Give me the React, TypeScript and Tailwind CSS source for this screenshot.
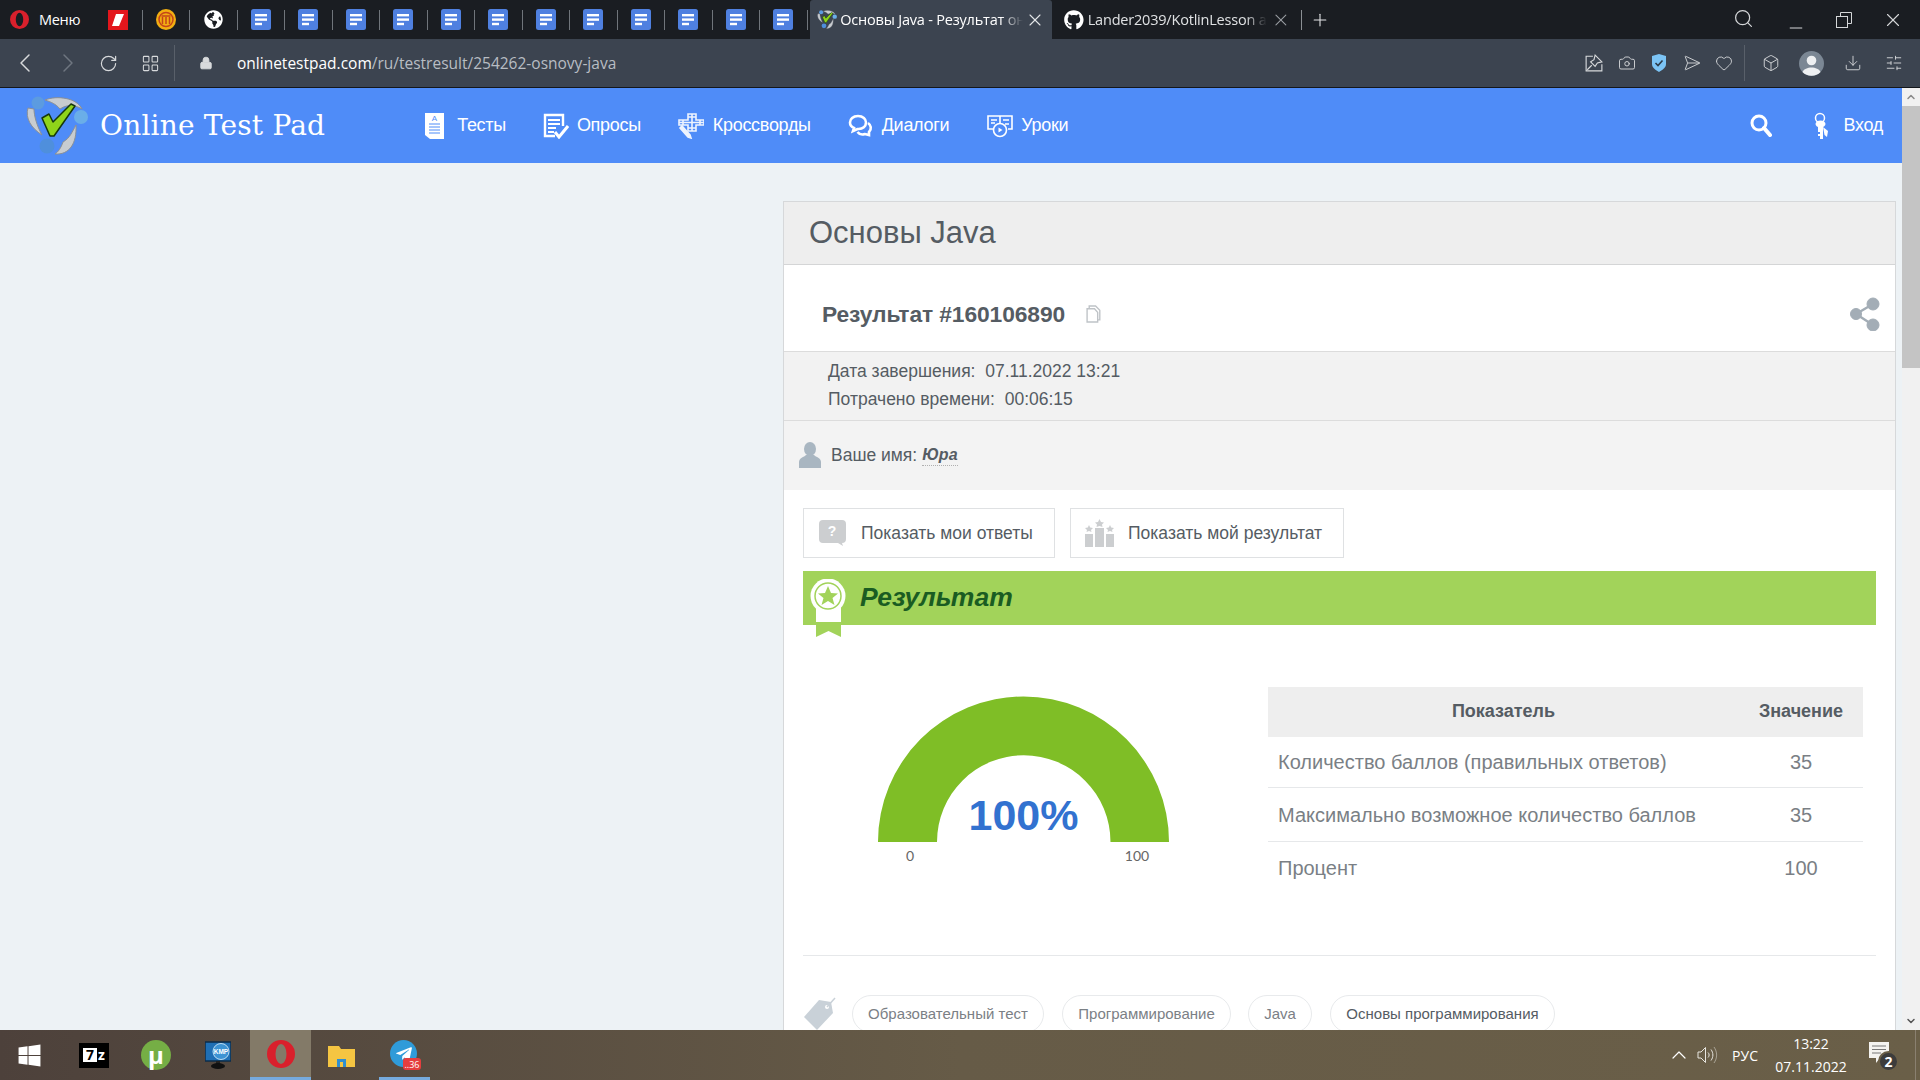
import { Box, Camera, ChevronDown, ChevronLeft, ChevronRight, ChevronUp, Download, Heart, LayoutGrid, Lock, Minus, Plus, RotateCw, Search, SendHorizontal, SlidersHorizontal, X } from "lucide-react";
import { FaGithub, FaGlobeAmericas, FaTelegramPlane, FaWindows } from "react-icons/fa";

const chromeFont = { fontFamily: '"Open Sans", sans-serif' };

const Logo = ({ size }: { size: number }) => (
  <svg width={(size * 64) / 60} height={size} viewBox="0 0 64 60">
    <path d="M3 12 C0 22 6 32 17 39 C12 30 9 20 9 13 Z" fill="#c8ccd0" stroke="#8b9096" strokeWidth="1" />
    <path d="M20 4 C32 -1 52 2 57 13 C52 10 44 7 35 13 C31 8 26 6 20 4 Z" fill="#c8ccd0" stroke="#8b9096" strokeWidth="1" />
    <path d="M30 58 C44 59 52 48 51 29 C47 36 45 42 38 46 C36 52 33 56 30 58 Z" fill="#c8ccd0" stroke="#8b9096" strokeWidth="1" />
    <circle cx="13" cy="7" r="6.500" fill="#5c9be0" />
    <circle cx="56" cy="21" r="7" fill="#6aaee8" />
    <circle cx="22" cy="50" r="7.500" fill="#4f8fdc" />
    <path d="M17 22 L24 18 L28 26 L46 8 L50 10 L29 40 L25 40 Z" fill="#8fd41a" stroke="#16380c" strokeWidth="1.500" strokeLinejoin="round" />
  </svg>
);

const DocIcon = () => (
  <svg width="20" height="21" viewBox="0 0 20 21">
    <rect width="20" height="21" rx="2.5" fill="#4f80e0" />
    <rect x="4" y="5" width="12" height="2.4" fill="#fff" />
    <rect x="4" y="9.4" width="12" height="2.4" fill="#fff" />
    <rect x="4" y="13.8" width="7" height="2.4" fill="#fff" />
  </svg>
);

const PinnedSlot = ({ children }: { children: React.ReactNode }) => (
  <div className="flex h-full w-[47.5px] items-center">
    <div className="flex flex-1 justify-center">{children}</div>
    <div className="h-[20px] w-px bg-[#70757b]" />
  </div>
);

const OperaIcon = ({ size }: { size: number }) => (
  <svg width={size} height={size} viewBox="0 0 28 28">
    <path
      fillRule="evenodd"
      fill="#d9202c"
      d="M14 0 A14 14 0 1 1 14 28 A14 14 0 1 1 14 0 Z M14 4 A5.500 10 0 1 0 14 24 A5.500 10 0 1 0 14 4 Z"
    />
  </svg>
);

function TabStrip() {
  const docs = Array.from({ length: 12 }, (_, i) => i);
  return (
    <div className="flex h-[39px] shrink-0 items-center bg-[#1a1d22] text-white" style={chromeFont}>
      <div className="flex h-full w-[810px] items-center">
        <div className="flex w-[95px] items-center pl-[10px]">
          <OperaIcon size={19} />
          <span className="ml-[10px] text-[14.5px] tracking-[-0.3px]">Меню</span>
        </div>
        <PinnedSlot>
          <svg width="20" height="20" viewBox="0 0 20 20">
            <rect width="20" height="20" fill="#e3161c" />
            <path d="M8 4 H16 L11 16 H4 Z" fill="#fff" />
          </svg>
        </PinnedSlot>
        <PinnedSlot>
          <svg width="20" height="21" viewBox="0 0 20 21">
            <ellipse cx="10" cy="10.5" rx="10" ry="10.5" fill="#f2ae12" />
            <circle cx="10" cy="10.5" r="7" fill="none" stroke="#c4441a" strokeWidth="1.5" />
            <path d="M6.5 8 V15 M10 8 V15 M13.5 8 V15 M5.5 7 H14.5" stroke="#c4441a" strokeWidth="1.5" />
          </svg>
        </PinnedSlot>
        <PinnedSlot>
          <FaGlobeAmericas className="h-[19px] w-[19px]" />
        </PinnedSlot>
        {docs.map((d) => (
          <PinnedSlot key={d}>
            <DocIcon />
          </PinnedSlot>
        ))}
      </div>
      <div className="flex h-full w-[242px] items-center rounded-t-[3px] bg-[#3c4450] pl-[7px]">
        <Logo size={19} />
        <span className="ml-[3px] w-[183px] overflow-hidden whitespace-nowrap text-[14.5px] tracking-[-0.2px] [mask-image:linear-gradient(to_right,black_88%,transparent)]">
          Основы Java - Результат онлайн теста
        </span>
        <X className="ml-[2px] h-5 w-5 text-[#e4e6e8]" strokeWidth={1.3} />
      </div>
      <div className="flex h-full w-[250px] items-center pl-[12px]">
        <FaGithub className="h-[20px] w-[20px]" />
        <span className="ml-[4px] w-[182px] overflow-hidden whitespace-nowrap text-[14.5px] tracking-[-0.2px] text-[#dfe1e3] [mask-image:linear-gradient(to_right,black_88%,transparent)]">
          Lander2039/KotlinLesson at main
        </span>
        <X className="ml-[4px] h-5 w-5 text-[#9a9ea3]" strokeWidth={1.3} />
        <div className="ml-[10px] h-[20px] w-px bg-[#8b8f94]" />
      </div>
      <Plus className="ml-[8px] h-5 w-5 text-[#e4e6e8]" strokeWidth={1.3} />
      <div className="ml-auto flex items-center pr-[16px] text-[#d5d7d9]">
        <Search className="mb-[2px] h-[21px] w-[21px]" strokeWidth={1.4} />
        <Minus className="ml-[32px] mt-[16px] h-5 w-5" strokeWidth={1.2} />
        <svg className="ml-[30px]" width="16" height="16" viewBox="0 0 16 16" fill="none" stroke="currentColor">
          <rect x="0.5" y="4.5" width="11" height="11" />
          <path d="M4.5 4.5 V0.5 H15.5 V11.5 H11.5" />
        </svg>
        <X className="ml-[30px] h-[22px] w-[22px]" strokeWidth={1.2} />
      </div>
    </div>
  );
}

function Toolbar() {
  return (
    <div className="flex h-[49px] shrink-0 items-center border-b border-[#14171b] bg-[#3c4450] text-[#d8dadc]" style={chromeFont}>
      <ChevronLeft className="ml-[9px] h-8 w-8" strokeWidth={1.1} />
      <ChevronRight className="ml-[11px] h-8 w-8 text-[#6f7680]" strokeWidth={1.1} />
      <RotateCw className="ml-[15px] h-[19px] w-[19px]" strokeWidth={1.5} />
      <LayoutGrid className="ml-[23px] h-[19px] w-[19px]" strokeWidth={1.3} />
      <div className="ml-[14px] h-[36px] w-px bg-[#59606a]" />
      <Lock className="ml-[24px] h-[16px] w-[14px] fill-[#d8dadc]" strokeWidth={1.5} />
      <div className="ml-[24px] mt-[1px] text-[15.5px]">
        <span className="text-white">onlinetestpad.com</span>
        <span className="text-[#b8bdc3]">/ru/testresult/254262-osnovy-java</span>
      </div>
      <div className="ml-auto flex items-center pr-[17px]">
        <div className="flex items-center gap-[14.5px]">
          <svg width="18" height="18" viewBox="0 0 16 16" fill="none" stroke="currentColor">
            <path d="M7 2 H1 V15 H15 V9" />
            <path d="M9 1 L15 7 L11 8 L9 11 L5 7 L8 5 Z M6 10 L2 14" />
          </svg>
          <Camera className="h-[18px] w-[18px]" strokeWidth={1.2} />
          <svg width="18" height="18" viewBox="0 0 16 18">
            <path d="M8 0 L15 2 V10 C15 14 11 16 8 18 C5 16 1 14 1 10 V2 Z" fill="#7cc4f5" />
            <path d="M4.5 9 L7 11.5 L11.5 6.5" fill="none" stroke="#2c3a48" strokeWidth="1.6" />
          </svg>
          <SendHorizontal className="h-[18px] w-[18px]" strokeWidth={1.2} />
          <Heart className="h-[18px] w-[18px]" strokeWidth={1.2} />
        </div>
        <div className="ml-[11px] h-[36px] w-px bg-[#59606a]" />
        <Box className="ml-[17px] h-[18px] w-[18px]" strokeWidth={1.2} />
        <svg className="ml-[19px]" width="25" height="25" viewBox="0 0 25 25">
          <circle cx="12.5" cy="12.5" r="12.5" fill="#7b8794" />
          <circle cx="12.5" cy="9.5" r="4.8" fill="#eef0f2" />
          <path d="M3.5 21 C6 15 19 15 21.5 21 C17 26 8 26 3.5 21 Z" fill="#eef0f2" />
        </svg>
        <Download className="ml-[20px] h-[18px] w-[18px]" strokeWidth={1.2} />
        <SlidersHorizontal className="ml-[23px] h-[18px] w-[18px]" strokeWidth={1.2} />
      </div>
    </div>
  );
}

const NavItem = ({ icon, label, className }: { icon: React.ReactNode; label: string; className: string }) => (
  <div className={`flex items-center ${className}`}>
    {icon}
    <span className="text-[18px] tracking-[-0.3px]">{label}</span>
  </div>
);

function SiteHeader() {
  return (
    <div className="flex h-[75px] shrink-0 items-center bg-[#4f8cf8] text-white">
      <div className="ml-[25px] w-[64px]">
        <Logo size={60} />
      </div>
      <span className="ml-[11px] text-[28px] tracking-[0.2px]" style={{ fontFamily: '"DejaVu Serif", serif' }}>
        Online Test Pad
      </span>
      <NavItem
        className="ml-[100px]"
        label="Тесты"
        icon={
          <svg className="mr-[13px]" width="19" height="26" viewBox="0 0 19 26">
            <path d="M0 0 H19 V26 H5 L0 22 Z" fill="#fff" />
            <text x="9.5" y="8" fontSize="8" textAnchor="middle" fill="#4f8cf8" fontFamily="Liberation Sans">A</text>
            <path d="M4 11 H15 M4 14 H15 M4 17 H15 M4 20 H15" stroke="#4f8cf8" strokeWidth="1" />
          </svg>
        }
      />
      <NavItem
        className="ml-[37px]"
        label="Опросы"
        icon={
          <svg className="mr-[8px]" width="26" height="26" viewBox="0 0 26 26" fill="none" stroke="#fff">
            <path d="M12 23 H2 V2 H20 V13" strokeWidth="2.4" />
            <path d="M5 7 H17 M5 11 H17 M5 15 H13 M5 19 H11" strokeWidth="1.8" />
            <path d="M12 19 L16 24 L25 13" strokeWidth="3" />
          </svg>
        }
      />
      <NavItem
        className="ml-[37px]"
        label="Кроссворды"
        icon={
          <svg className="mr-[9px]" width="26" height="26" viewBox="0 0 26 26" fill="none" stroke="#fff" strokeWidth="1.6" opacity="0.9">
            <path d="M10 1 H18 V7 H26 V12 H18 V18 H10 V12 H1 V7 H10 Z" />
            <path d="M14 1 V18 M10 4 H18 M1 9.5 H26 M5 7 V12 M22 7 V12 M10 15 H18" />
            <path d="M2 15 L10 24 L13 25 L12 22 L4 13 Z" fill="#fff" />
          </svg>
        }
      />
      <NavItem
        className="ml-[37px]"
        label="Диалоги"
        icon={
          <svg className="mr-[9px]" width="25" height="24" viewBox="0 0 25 24" fill="none" stroke="#fff" strokeWidth="2.6">
            <path d="M10 2 C5 2 2 5 2 8.5 C2 11 3.5 13 6 14 L5 17 L9.5 15 C15 15.500 18 12 18 8.5 C18 5 15 2 10 2 Z" />
            <path d="M20 9 C23 11 24 15 21 18 L21 21 L17 20 C14 21 11 20 9.500 18" />
          </svg>
        }
      />
      <NavItem
        className="ml-[38px]"
        label="Уроки"
        icon={
          <svg className="mr-[8px]" width="26" height="24" viewBox="0 0 26 24" fill="none" stroke="#fff" strokeWidth="1.6">
            <path d="M1 2 H13 V15 H1 Z M13 2 H25 V15 H21" />
            <path d="M4 6 H10 M4 9 H8 M16 6 H22 M18 10 H22" />
            <circle cx="13" cy="16" r="6.500" fill="#4f8cf8" />
            <path d="M11.500 13.500 L15.500 16 L11.500 18.500 Z" fill="#fff" stroke="none" />
          </svg>
        }
      />
      <div className="ml-auto flex items-center pr-[19px]">
        <svg width="22" height="23" viewBox="0 0 22 23" fill="none" stroke="#fff">
          <circle cx="9" cy="9" r="7" strokeWidth="3" />
          <path d="M14 14 L20 21" strokeWidth="4" strokeLinecap="round" />
        </svg>
        <svg className="ml-[42px]" width="15" height="27" viewBox="0 0 15 27" fill="#fff">
          <circle cx="6" cy="6" r="4.500" fill="none" stroke="#fff" strokeWidth="1.500" />
          <ellipse cx="6.500" cy="12" rx="5" ry="3.500" />
          <path d="M4 13 H9 V27 H6 V24 H4 V22 H6 V20 H4 Z" />
          <path d="M9 15 L14 19 L13 25 L10.500 23 Z" />
        </svg>
        <span className="ml-[14px] text-[18px] tracking-[-0.3px]">Вход</span>
      </div>
    </div>
  );
}

function Gauge() {
  return (
    <div className="relative ml-[75px] mt-[9px] h-[175px] w-[291px]">
      <svg width="291" height="146" viewBox="0 0 291 146">
        <path d="M0 146 A145.500 145.500 0 0 1 291 146 H232.500 A86.500 86.500 0 0 0 59 146 Z" fill="#7fbe26" />
      </svg>
      <div className="absolute left-0 right-0 top-[92px] text-center text-[43px] font-bold leading-[54px] text-[#3272d0]">100%</div>
      <div className="absolute left-[28px] top-[151px] w-[8px] text-center text-[14px] leading-[18px] text-[#666]" style={{ fontFamily: '"Lato", sans-serif' }}>0</div>
      <div className="absolute left-[246px] top-[151px] w-[26px] text-center text-[14px] leading-[18px] text-[#666]" style={{ fontFamily: '"Lato", sans-serif' }}>100</div>
    </div>
  );
}

const rows = [
  { name: "Количество баллов (правильных ответов)", value: "35", h: "h-[51px]" },
  { name: "Максимально возможное количество баллов", value: "35", h: "h-[54px]" },
  { name: "Процент", value: "100", h: "h-[51px]" },
];

function ResultTable() {
  return (
    <div className="w-[595px]">
      <div className="flex h-[50px] items-center bg-[#eeeeee] pb-[1px] text-[18px] font-bold text-[#555c63]">
        <div className="w-[471px] text-center">Показатель</div>
        <div className="w-[124px] text-center">Значение</div>
      </div>
      {rows.map((r, i) => (
        <div key={r.name} className={`flex items-center text-[20px] text-[#7a7f85] ${r.h} ${i < 2 ? "border-b border-[#e6e8ea]" : ""}`}>
          <div className="w-[471px] pl-[10px]">{r.name}</div>
          <div className="w-[124px] text-center">{r.value}</div>
        </div>
      ))}
    </div>
  );
}

const tags = [
  { label: "Образовательный тест", w: "w-[192px]", color: "text-[#7b8085]", ml: "ml-[16px]" },
  { label: "Программирование", w: "w-[169px]", color: "text-[#7b8085]", ml: "ml-[18px]" },
  { label: "Java", w: "w-[64px]", color: "text-[#7b8085]", ml: "ml-[17px]" },
  { label: "Основы программирования", w: "w-[225px]", color: "text-[#555c63]", ml: "ml-[18px]" },
];

function ResultCard() {
  return (
    <div className="w-[1113px] border-x border-t border-[#d6d8da] bg-white text-[#555c63]">
      <div className="flex h-[63px] items-center border-b border-[#d4d5d6] bg-[#eeeeee] pl-[25px] text-[31px]">Основы Java</div>
      <div className="flex h-[87px] items-center border-b border-[#dcdcdc] pl-[38px] pr-[15px] pt-[12px]">
        <span className="text-[22.8px] font-bold tracking-[-0.1px]">Результат #160106890</span>
        <svg className="ml-[21px]" width="17" height="18" viewBox="0 0 16 17" fill="none" stroke="#bfc3c7" strokeWidth="1.300">
          <path d="M3 3 V1 H9 L13 5 V14 H11" />
          <path d="M1 3.500 H8 L11 7 V16 H1 Z" fill="#fff" />
        </svg>
        <svg className="ml-auto" width="30" height="34" viewBox="0 0 30 34" fill="#a3adb6" stroke="#a3adb6">
          <path d="M6 17 L23 7 M6 17 L23 28" strokeWidth="2.500" />
          <circle cx="23" cy="7" r="6" />
          <circle cx="6" cy="17" r="5.500" />
          <circle cx="23" cy="28" r="6" />
        </svg>
      </div>
      <div className="flex h-[69px] flex-col justify-center gap-[5px] border-b border-[#dcdcdc] bg-[#f2f2f2] pb-[2px] pl-[44px] text-[17.5px] leading-[23px]">
        <div>Дата завершения:&nbsp; 07.11.2022 13:21</div>
        <div>Потрачено времени:&nbsp; 00:06:15</div>
      </div>
      <div className="flex h-[69px] items-center bg-[#f3f3f3] pb-[1px] pl-[15px] text-[17.5px]">
        <svg width="22" height="26" viewBox="0 0 22 26" fill="#a9b6c1">
          <ellipse cx="11" cy="7" rx="6" ry="7" />
          <path d="M0 26 V20 C0 16 5 15 7 13 H15 C17 15 22 16 22 20 V26 Z" />
        </svg>
        <span className="ml-[10px]">Ваше имя:</span>
        <span className="ml-[5px] border-b border-dotted border-[#b0b0b0] text-[16px] font-bold italic leading-[20px]">Юра</span>
      </div>
      <div className="mx-[19px] mt-[18px] flex gap-[15px] text-[17.5px]">
        <div className="flex h-[50px] w-[252px] items-center border border-[#dfe1e3] pl-[14px]">
          <svg width="29" height="28" viewBox="0 0 29 28">
            <path d="M5 1 H24 A4 4 0 0 1 28 5 V20 A4 4 0 0 1 24 24 L25 27 L20 24 H5 A4 4 0 0 1 1 20 V5 A4 4 0 0 1 5 1 Z" fill="#ccced0" />
            <text x="14" y="17" fontSize="14" fontWeight="bold" textAnchor="middle" fill="#fff" fontFamily="Liberation Sans">?</text>
          </svg>
          <span className="ml-[14px]">Показать мои ответы</span>
        </div>
        <div className="flex h-[50px] w-[274px] items-center border border-[#dfe1e3] pl-[14px]">
          <svg width="29" height="28" viewBox="0 0 29 28" fill="#ccced0">
            <rect x="0" y="15" width="8" height="13" />
            <rect x="10" y="9" width="9" height="19" />
            <rect x="21" y="15" width="8" height="13" />
            <path d="M14.500 0 L16 3 L19 3.500 L17 5.500 L17.500 8 L14.500 7 L11.500 8 L12 5.500 L10 3.500 L13 3 Z" />
            <path d="M4 6 L5.200 8.500 L8 9 L6 11 L6.500 13 L4 12 L1.500 13 L2 11 L0 9 L2.800 8.500 Z" />
            <path d="M25 6 L26.200 8.500 L29 9 L27 11 L27.500 13 L25 12 L22.500 13 L23 11 L21 9 L23.800 8.500 Z" />
          </svg>
          <span className="ml-[14px]">Показать мой результат</span>
        </div>
      </div>
      <div className="relative mx-[19px] mt-[13px] flex h-[54px] items-center bg-[#a2d35a] pl-[57px] text-[26.5px] font-bold italic text-[#1a5c22]">
        Результат
        <svg className="absolute left-[7px] top-[8px]" width="36" height="58" viewBox="0 0 36 58">
          <path d="M6 26 H31 V58 L18.500 52 L6 58 Z" fill="#a2d35a" />
          <rect x="6" y="26" width="25" height="17" fill="#fff" />
          <circle cx="18" cy="17" r="17.500" fill="#fff" />
          <circle cx="18" cy="17" r="13" fill="none" stroke="#a2d35a" strokeWidth="1.500" />
          <path d="M18 7 L21 14 L28 14.500 L22.500 19 L24.500 26 L18 22 L11.500 26 L13.500 19 L8 14.500 L15 14 Z" fill="#a2d35a" />
        </svg>
      </div>
      <div className="mx-[19px] mt-[62px] flex h-[269px] border-b border-[#e6e8ea]">
        <div className="w-[465px]">
          <Gauge />
        </div>
        <ResultTable />
      </div>
      <div className="ml-[19px] mt-[39px] flex items-center text-[15px]">
        <svg width="33" height="34" viewBox="0 0 33 34">
          <path d="M16 3 L28 5 L30 16 L14 33 L1 20 Z" fill="#c9d1d8" />
          <circle cx="24" cy="10" r="2" fill="#fff" />
          <path d="M24 10 L32 1" stroke="#c9d1d8" strokeWidth="1.500" />
        </svg>
        {tags.map((t) => (
          <div key={t.label} className={`flex h-[38px] items-center justify-center rounded-full border border-[#e8eaec] ${t.w} ${t.color} ${t.ml}`}>
            {t.label}
          </div>
        ))}
      </div>
    </div>
  );
}

function Scrollbar() {
  return (
    <div className="flex h-full w-[18px] shrink-0 flex-col bg-[#f1f1f1] text-[#8a8a8a]">
      <div className="flex h-[18px] items-center justify-center">
        <ChevronUp className="h-3 w-3" strokeWidth={3} />
      </div>
      <div className="h-[262px] bg-[#c4c4c4]" />
      <div className="mt-auto flex h-[18px] items-center justify-center">
        <ChevronDown className="h-3 w-3 text-[#555]" strokeWidth={3} />
      </div>
    </div>
  );
}

function Taskbar() {
  return (
    <div className="flex h-[50px] shrink-0 items-center bg-gradient-to-r from-[#4d413b] via-[#665b47] to-[#6a5f48] text-white" style={chromeFont}>
      <FaWindows className="ml-[17px] h-[25px] w-[25px]" />
      <div className="ml-[37px] flex h-[25px] w-[30px] items-center justify-center bg-black text-[14px] font-bold leading-none">
        <span className="bg-white px-[3px] text-black">7</span>
        <span className="ml-[1px]">z</span>
      </div>
      <div className="ml-[32px] flex h-[30px] w-[30px] items-center justify-center rounded-full bg-[#75ae45] text-[24px] font-bold leading-none">μ</div>
      <svg className="ml-[34px]" width="26" height="28" viewBox="0 0 26 28">
        <rect x="0" y="1" width="26" height="19" fill="#1f6fb5" stroke="#0c2c4a" strokeWidth="1.500" />
        <circle cx="16" cy="10.500" r="8" fill="#3d93d4" stroke="#bcdcf2" />
        <text x="16" y="13" fontSize="6.500" fontWeight="bold" textAnchor="middle" fill="#fff" fontFamily="Liberation Sans">KMP</text>
        <path d="M11 20 H15 V23 H11 Z" fill="#222" />
        <ellipse cx="13" cy="25" rx="7" ry="3" fill="#111" />
      </svg>
      <div className="ml-[19px] flex h-full w-[61px] items-center justify-center border-b-[3px] border-[#76abde] bg-[#837a68]">
        <OperaIcon size={28} />
      </div>
      <svg className="ml-[17px]" width="27" height="23" viewBox="0 0 27 23">
        <path d="M0 2 H11 L13 5 H27 V23 H0 Z" fill="#f5c542" />
        <rect x="9" y="15" width="9" height="8" fill="#2f8fd0" />
        <rect x="12" y="18" width="3" height="5" fill="#f5c542" />
      </svg>
      <div className="ml-[24px] flex h-full w-[51px] items-center border-b-[3px] border-[#76abde]">
        <div className="relative ml-[11px] flex h-[27px] w-[27px] items-center justify-center rounded-full bg-[#2f9bd9]">
          <FaTelegramPlane className="h-[18px] w-[18px]" />
          <div className="absolute left-[13px] top-[18px] flex h-[12px] w-[18px] items-center justify-center rounded-[3px] bg-[#e53e3e] text-[9px] leading-none">..36</div>
        </div>
      </div>
      <div className="ml-auto flex items-center">
        <ChevronUp className="h-6 w-6" strokeWidth={1.2} />
        <svg className="ml-[6px]" width="21" height="18" viewBox="0 0 21 18" fill="none" stroke="#e8e6e0">
          <path d="M1 6 H4 L8.500 1.500 V16.500 L4 12 H1 Z" />
          <path d="M11 6.500 C12.500 8 12.500 10 11 11.500" />
          <path d="M14 3.500 C16.500 7 16.500 11 14 14.500" />
          <path d="M17 1 C20.500 6 20.500 12 17 17" opacity="0.5" />
        </svg>
        <span className="ml-[14px] text-[14px]">РУС</span>
        <div className="ml-[17px] flex w-[72px] flex-col items-center text-[14px] leading-[23px]">
          <span>13:22</span>
          <span>07.11.2022</span>
        </div>
        <div className="relative ml-[22px] h-[26px] w-[21px]">
          <svg width="20" height="22" viewBox="0 0 20 22" fill="#f4f3f0">
            <path d="M0 0 H20 V16 H11 L7 21 V16 H0 Z" />
            <path d="M3 4 H17 M3 7.500 H17 M3 11 H12" stroke="#777" strokeWidth="1" />
          </svg>
          <div className="absolute left-[9px] top-[9px] flex h-[21px] w-[21px] items-center justify-center rounded-full border-2 border-[#6a5f48] bg-[#3c3c3c] text-[14px] font-bold leading-none">2</div>
        </div>
        <div className="ml-[25px] mr-[4px] h-[50px] w-px bg-[#8a8070]" />
      </div>
    </div>
  );
}

export default function App() {
  return (
    <div className="flex h-screen w-[1920px] flex-col overflow-hidden bg-[#edf2f5]" style={{ fontFamily: '"Liberation Sans", sans-serif' }}>
      <TabStrip />
      <Toolbar />
      <div className="flex min-h-0 flex-1">
        <div className="flex min-w-0 flex-1 flex-col overflow-hidden">
          <SiteHeader />
          <div className="flex shrink-0 justify-end pr-[6px] pt-[38px]">
            <ResultCard />
          </div>
        </div>
        <Scrollbar />
      </div>
      <Taskbar />
    </div>
  );
}
